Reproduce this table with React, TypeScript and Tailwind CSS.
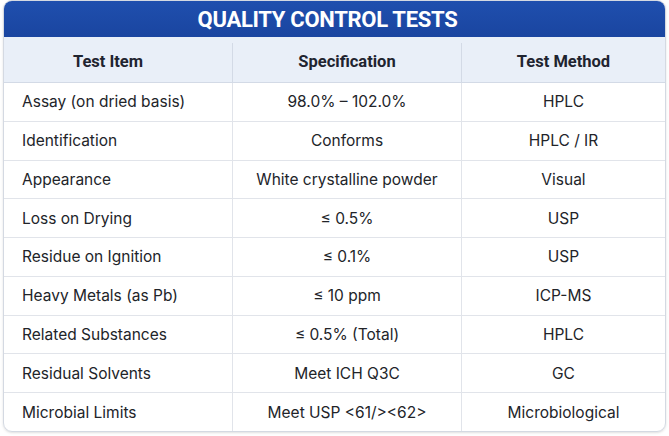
const rows: [string, string, string][] = [
  ['Assay (on dried basis)', '98.0% – 102.0%', 'HPLC'],
  ['Identification', 'Conforms', 'HPLC / IR'],
  ['Appearance', 'White crystalline powder', 'Visual'],
  ['Loss on Drying', '≤ 0.5%', 'USP'],
  ['Residue on Ignition', '≤ 0.1%', 'USP'],
  ['Heavy Metals (as Pb)', '≤ 10 ppm', 'ICP-MS'],
  ['Related Substances', '≤ 0.5% (Total)', 'HPLC'],
  ['Residual Solvents', 'Meet ICH Q3C', 'GC'],
  ['Microbial Limits', 'Meet USP <61/><62>', 'Microbiological'],
]

export default function App() {
  return (
    <div className="w-[669px] h-[436px] bg-white px-[3px] pb-[4px]" style={{ fontFamily: 'Inter, "Liberation Sans", sans-serif' }}>
      <div className="h-full rounded-[9px] border border-[#d4d9e2] overflow-hidden shadow-sm flex flex-col">
        <div className="h-[36px] flex items-center justify-center pr-[14px] bg-gradient-to-b from-[#1f4fae] to-[#1a45a0] text-white font-bold text-[22px] tracking-[-0.3px]" style={{ fontFamily: 'Roboto, sans-serif' }}>
          QUALITY CONTROL TESTS
        </div>
        <div className="grid grid-cols-[229px_229px_1fr] h-[46px] pt-[6px] bg-[#e9eff8] border-b border-[#d3dae6] text-[16.5px] font-bold text-[#1f2430]" style={{ fontFamily: 'Roboto, sans-serif' }}>
          <div className="flex items-center justify-center pr-[20px] border-r border-[#d3dae6]">Test Item</div>
          <div className="flex items-center justify-center border-r border-[#d3dae6]">Specification</div>
          <div className="flex items-center justify-center">Test Method</div>
        </div>
        {rows.map((r, i) => (
          <div
            key={i}
            className={`grid grid-cols-[229px_229px_1fr] flex-1 text-[15.5px] text-[#222429] ${i < rows.length - 1 ? 'border-b border-[#e1e4ea]' : ''}`}
          >
            <div className="flex items-center pl-[18px] border-r border-[#e1e4ea]">{r[0]}</div>
            <div className="flex items-center justify-center border-r border-[#e1e4ea]">{r[1]}</div>
            <div className="flex items-center justify-center">{r[2]}</div>
          </div>
        ))}
      </div>
    </div>
  )
}
